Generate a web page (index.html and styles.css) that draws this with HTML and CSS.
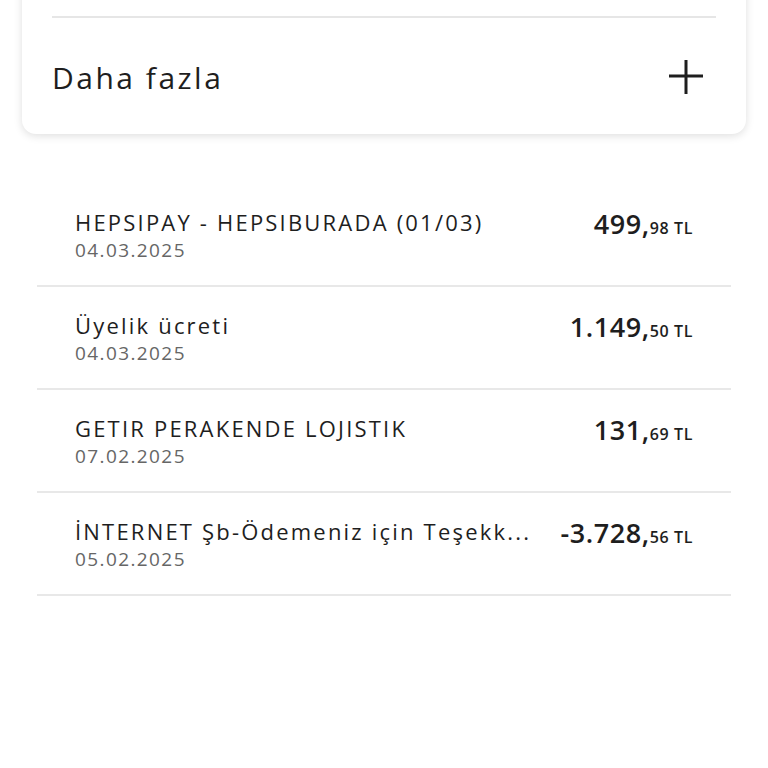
FILE: index.html
```html
<!DOCTYPE html>
<html lang="tr">
<head>
<meta charset="utf-8">
<link rel="stylesheet" href="styles.css">
</head>
<body>
<div class="page">
  <div class="card">
    <div class="card-divider"></div>
    <div class="more-row">
      <span class="more-label">Daha fazla</span>
      <svg class="plus" width="36" height="36" viewBox="0 0 36 36"><path d="M18 1 V35 M1 17 H35" stroke="#1e1e1e" stroke-width="3" fill="none"/></svg>
    </div>
  </div>
  <div class="list">
    <div class="row">
      <div class="info">
        <div class="title">HEPSIPAY - HEPSIBURADA (01/03)</div>
        <div class="date">04.03.2025</div>
      </div>
      <div class="amount"><span class="int">499,</span><span class="dec">98 TL</span></div>
    </div>
    <div class="row">
      <div class="info">
        <div class="title">Üyelik ücreti</div>
        <div class="date">04.03.2025</div>
      </div>
      <div class="amount"><span class="int">1.149,</span><span class="dec">50 TL</span></div>
    </div>
    <div class="row">
      <div class="info">
        <div class="title">GETIR PERAKENDE LOJISTIK</div>
        <div class="date">07.02.2025</div>
      </div>
      <div class="amount"><span class="int">131,</span><span class="dec">69 TL</span></div>
    </div>
    <div class="row">
      <div class="info">
        <div class="title">İNTERNET Şb-Ödemeniz için Teşekk...</div>
        <div class="date">05.02.2025</div>
      </div>
      <div class="amount"><span class="int">-3.728,</span><span class="dec">56 TL</span></div>
    </div>
  </div>
</div>
</body>
</html>
```
FILE: styles.css
```css
html, body {
  margin: 0;
  padding: 0;
  background: #ffffff;
}
body {
  font-family: "Open Sans", "Noto Sans", sans-serif;
  color: #1e1e1e;
  width: 768px;
  height: 768px;
  overflow: hidden;
}
.page {
  display: flex;
  flex-direction: column;
}
.card {
  margin: -20px 22px 0 22px;
  background: #fff;
  border-radius: 0 0 14px 14px;
  box-shadow: 0 2px 8px rgba(0,0,0,0.13);
  padding: 36px 30px 0 30px;
  box-sizing: border-box;
  height: 154px;
}
.card-divider {
  height: 2px;
  background: #e6e6e6;
}
.more-row {
  display: flex;
  align-items: center;
  justify-content: space-between;
  height: 118px;
  padding-right: 12px;
}
.more-label {
  font-size: 30px;
  font-weight: 500;
  letter-spacing: 2.5px;
}
.plus {
  display: block;
}
.list {
  margin: 50px 37px 0 37px;
}
.row {
  display: flex;
  justify-content: space-between;
  align-items: flex-start;
  border-bottom: 2px solid #e8e8e8;
  padding: 24px 38px 0 38px;
  box-sizing: content-box;
  height: 77px;
}
.title {
  font-size: 22px;
  line-height: 28px;
  font-weight: 500;
  color: #1e1e1e;
  letter-spacing: 2.2px;
}
.date {
  font-size: 19px;
  line-height: 28px;
  color: #666;
  letter-spacing: 1.4px;
}
.amount {
  white-space: nowrap;
  line-height: 32px;
}
.int {
  font-size: 27px;
  font-weight: 600;
  letter-spacing: 0.6px;
}
.dec {
  font-size: 16px;
  font-weight: 600;
  letter-spacing: 0.6px;
}
```
